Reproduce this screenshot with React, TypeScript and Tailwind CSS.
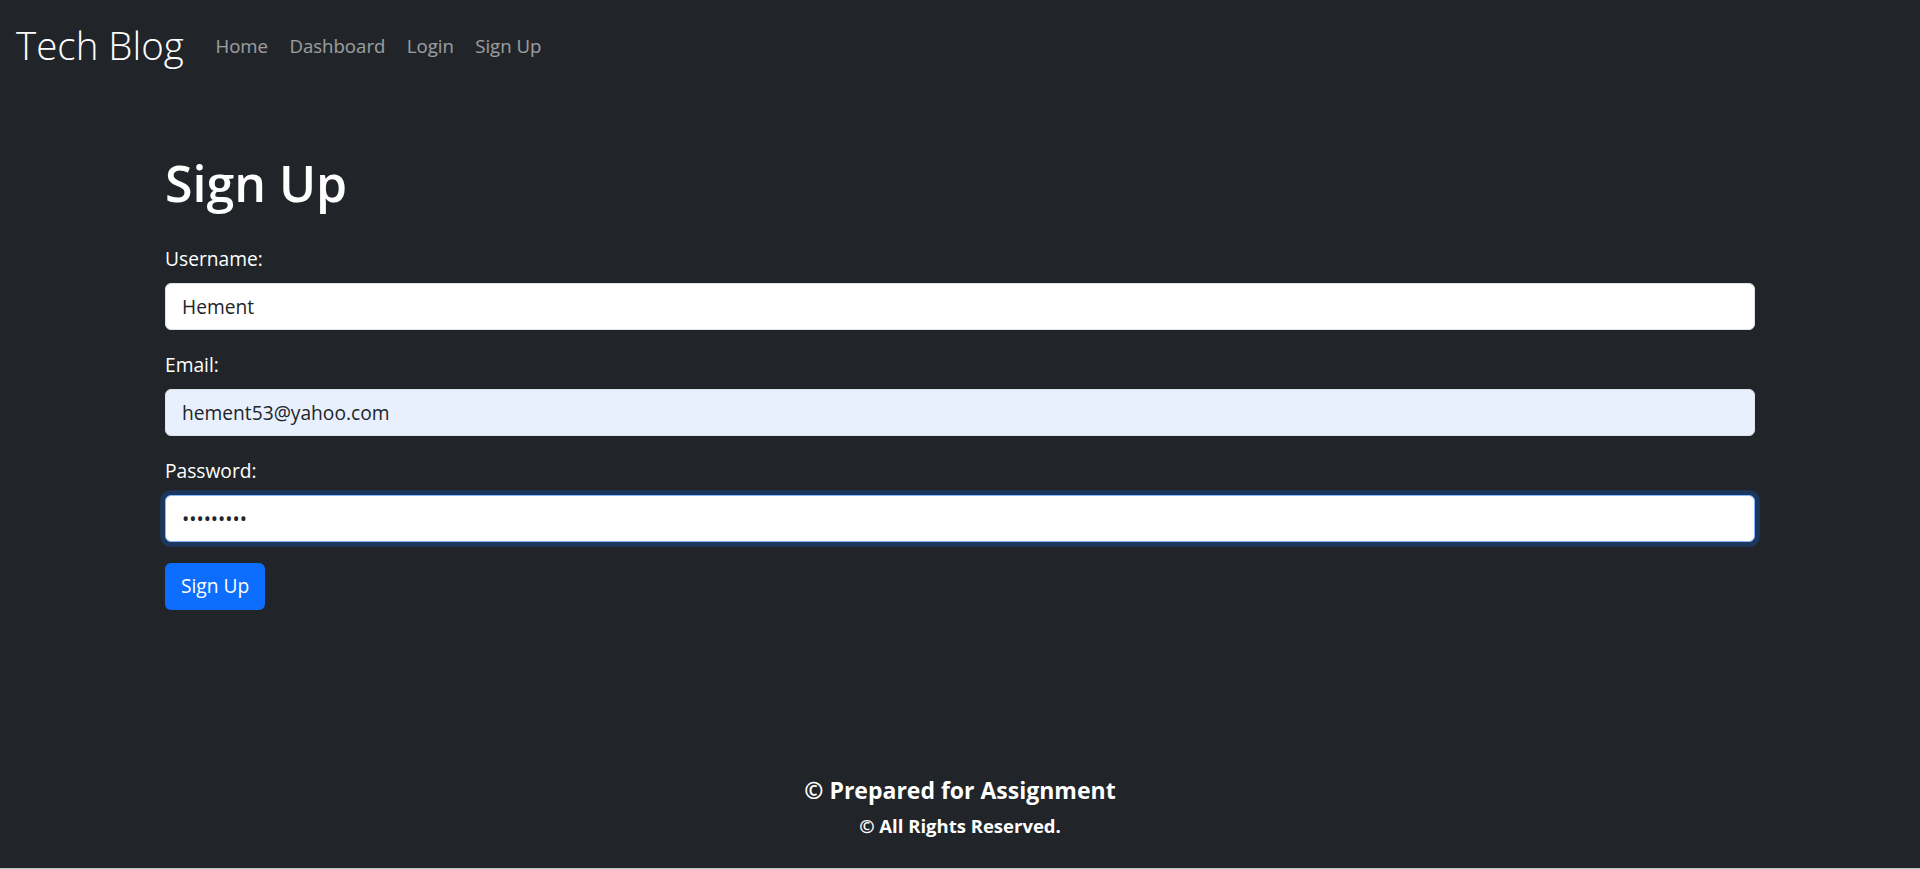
import { useState } from 'react';

const font = { fontFamily: '"Open Sans", "Noto Sans", sans-serif' };

const Field = ({
  label,
  type,
  value,
  className,
  autoFocus,
}: {
  label: string;
  type: string;
  value: string;
  className: string;
  autoFocus?: boolean;
}) => {
  const [val, setVal] = useState(value);
  return (
    <div className="mb-[21px] flex flex-col">
      <label className="mb-[9px] h-[28.8px] text-[19.2px] leading-[28.8px] text-white">{label}</label>
      <input
        type={type}
        value={val}
        autoFocus={autoFocus}
        onChange={(e) => setVal(e.target.value)}
        className={`h-[47px] w-full rounded-[6px] border px-[16px] text-[19.2px] text-[#212529] caret-black outline-none ${className}`}
      />
    </div>
  );
};

export default function App() {
  const navLinks = ['Home', 'Dashboard', 'Login', 'Sign Up'];

  return (
    <div className="flex h-[869px] flex-col bg-[#212529]" style={font}>
      <nav className="flex h-[92px] items-center px-[16px]">
        <a href="#" className="mr-[21px] text-[38.5px] font-light leading-[1.5] text-white">
          Tech Blog
        </a>
        <ul className="flex items-center">
          {navLinks.map((link) => (
            <li key={link}>
              <a href="#" className="block px-[10.7px] text-[18.6px] leading-[1.5] text-white/55">
                {link}
              </a>
            </li>
          ))}
        </ul>
      </nav>

      <main className="flex-1">
        <div className="mx-auto w-[1590px] pt-[61px]">
          <h1 className="mb-[30px] h-[62.4px] text-[50px] font-semibold leading-[1.2] text-white">Sign Up</h1>
          <form onSubmit={(e) => e.preventDefault()}>
            <Field label="Username:" type="text" value="Hement" className="border-[#dee2e6] bg-white" />
            <Field label="Email:" type="email" value="hement53@yahoo.com" className="border-[#dee2e6] bg-[#e8f0fe]" />
            <Field
              label="Password:"
              type="password"
              value="123456789"
              autoFocus
              className="border-[#86b7fe] bg-white shadow-[0_0_0_4.8px_rgba(13,110,253,0.25)]"
            />
            <button
              type="submit"
              className="h-[47px] rounded-[6px] bg-[#0d6efd] px-[16px] text-[19.2px] text-white"
            >
              Sign Up
            </button>
          </form>
        </div>
      </main>

      <footer className="flex flex-col items-center pb-[28px] text-white">
        <h4 className="mb-[6px] text-[23px] font-bold leading-[1.3]">© Prepared for Assignment</h4>
        <p className="text-[18.5px] font-bold leading-[1.5]">© All Rights Reserved.</p>
      </footer>
      <div className="h-px bg-[#b8cdc8]" />
    </div>
  );
}
